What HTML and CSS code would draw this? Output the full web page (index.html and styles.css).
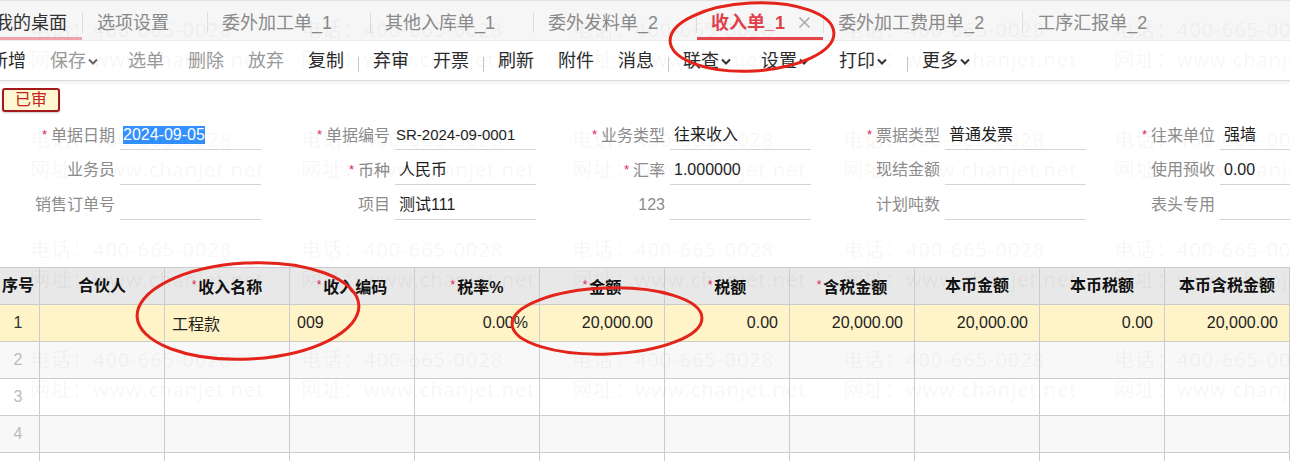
FILE: index.html
```html
<!DOCTYPE html>
<html lang="zh-CN">
<head>
<meta charset="utf-8">
<title>收入单_1</title>
<link rel="stylesheet" href="styles.css">
</head>
<body>
<div class="app">
  <div class="tabbar">
    <div class="tabs">
      <div class="tab home">我的桌面</div><span class="tsep"></span>
      <div class="tab">选项设置<span class="tclose"></span></div><span class="tsep"></span>
      <div class="tab">委外加工单_1<span class="tclose"></span></div><span class="tsep"></span>
      <div class="tab">其他入库单_1<span class="tclose"></span></div><span class="tsep"></span>
      <div class="tab">委外发料单_2<span class="tclose"></span></div><span class="tsep"></span>
      <div class="tab active">收入单_1<span class="tclose"><svg width="13" height="13" viewBox="0 0 13 13"><path d="M1.5 1.5L11.5 11.5M11.5 1.5L1.5 11.5" stroke="#aaaaaa" stroke-width="1.5" fill="none"/></svg></span></div><span class="tsep"></span>
      <div class="tab">委外加工费用单_2<span class="tclose"></span></div><span class="tsep"></span>
      <div class="tab">工序汇报单_2<span class="tclose"></span></div>
    </div>
  </div>
  <div class="toolbar">
    <div class="tools">
      <span class="tool">新增</span>
      <span class="tool off">保存<svg class="chev" width="10" height="7" viewBox="0 0 10 7"><path d="M1 1.5L5 5.5L9 1.5" stroke="#666" stroke-width="2" fill="none"/></svg></span>
      <span class="tool off">选单</span>
      <span class="tool off">删除</span>
      <span class="tool off">放弃</span>
      <span class="tool">复制</span>
      <span class="bsep"></span>
      <span class="tool">弃审</span>
      <span class="tool">开票</span>
      <span class="bsep"></span>
      <span class="tool">刷新</span>
      <span class="tool">附件</span>
      <span class="tool">消息</span>
      <span class="bsep"></span>
      <span class="tool">联查<svg class="chev" width="10" height="7" viewBox="0 0 10 7"><path d="M1 1.5L5 5.5L9 1.5" stroke="#333" stroke-width="2" fill="none"/></svg></span>
      <span class="tool">设置<svg class="chev" width="10" height="7" viewBox="0 0 10 7"><path d="M1 1.5L5 5.5L9 1.5" stroke="#333" stroke-width="2" fill="none"/></svg></span>
      <span class="tool">打印<svg class="chev" width="10" height="7" viewBox="0 0 10 7"><path d="M1 1.5L5 5.5L9 1.5" stroke="#333" stroke-width="2" fill="none"/></svg></span>
      <span class="bsep"></span>
      <span class="tool">更多<svg class="chev" width="10" height="7" viewBox="0 0 10 7"><path d="M1 1.5L5 5.5L9 1.5" stroke="#333" stroke-width="2" fill="none"/></svg></span>
    </div>
  </div>

  <div class="content">
    <div class="badge">已审</div>
    <div class="form">
      <div class="field"><label class="lbl"><i class="req">*</i>单据日期</label><div class="inp"><span class="sel">2024-09-05</span></div></div>
      <div class="field"><label class="lbl"><i class="req">*</i>单据编号</label><div class="inp small">SR-2024-09-0001</div></div>
      <div class="field"><label class="lbl"><i class="req">*</i>业务类型</label><div class="inp">往来收入</div></div>
      <div class="field"><label class="lbl"><i class="req">*</i>票据类型</label><div class="inp">普通发票</div></div>
      <div class="field"><label class="lbl"><i class="req">*</i>往来单位</label><div class="inp">强墙</div></div>

      <div class="field"><label class="lbl">业务员</label><div class="inp"></div></div>
      <div class="field"><label class="lbl"><i class="req">*</i>币种</label><div class="inp">人民币</div></div>
      <div class="field"><label class="lbl"><i class="req">*</i>汇率</label><div class="inp">1.000000</div></div>
      <div class="field"><label class="lbl">现结金额</label><div class="inp"></div></div>
      <div class="field"><label class="lbl">使用预收</label><div class="inp">0.00</div></div>

      <div class="field"><label class="lbl">销售订单号</label><div class="inp"></div></div>
      <div class="field"><label class="lbl">项目</label><div class="inp">测试111</div></div>
      <div class="field"><label class="lbl">123</label><div class="inp"></div></div>
      <div class="field"><label class="lbl">计划吨数</label><div class="inp"></div></div>
      <div class="field"><label class="lbl">表头专用</label><div class="inp"></div></div>
    </div>

    <table class="grid">
      <colgroup>
        <col class="c-no"><col class="c"><col class="c"><col class="c"><col class="c"><col class="c"><col class="c"><col class="c"><col class="c"><col class="c"><col class="c">
      </colgroup>
      <thead>
        <tr>
          <th>序号</th>
          <th>合伙人</th>
          <th><i class="hreq">*</i>收入名称</th>
          <th><i class="hreq">*</i>收入编码</th>
          <th><i class="hreq">*</i>税率%</th>
          <th><i class="hreq">*</i>金额</th>
          <th><i class="hreq">*</i>税额</th>
          <th><i class="hreq">*</i>含税金额</th>
          <th>本币金额</th>
          <th>本币税额</th>
          <th>本币含税金额</th>
        </tr>
      </thead>
      <tbody>
        <tr class="cur">
          <td class="no">1</td><td></td><td class="txt">工程款</td><td class="txt">009</td>
          <td class="num">0.00%</td><td class="num">20,000.00</td><td class="num">0.00</td><td class="num">20,000.00</td>
          <td class="num">20,000.00</td><td class="num">0.00</td><td class="num">20,000.00</td>
        </tr>
        <tr class="alt"><td class="no dim">2</td><td></td><td></td><td></td><td></td><td></td><td></td><td></td><td></td><td></td><td></td></tr>
        <tr><td class="no dim">3</td><td></td><td></td><td></td><td></td><td></td><td></td><td></td><td></td><td></td><td></td></tr>
        <tr class="alt"><td class="no dim">4</td><td></td><td></td><td></td><td></td><td></td><td></td><td></td><td></td><td></td><td></td></tr>
        <tr><td class="no dim">5</td><td></td><td></td><td></td><td></td><td></td><td></td><td></td><td></td><td></td><td></td></tr>
      </tbody>
    </table>
  </div>
</div>

<div class="watermark">
  <div class="wm"><div>电话：400-665-0028</div><div>网址：www.chanjet.net</div></div>
  <div class="wm"><div>电话：400-665-0028</div><div>网址：www.chanjet.net</div></div>
  <div class="wm"><div>电话：400-665-0028</div><div>网址：www.chanjet.net</div></div>
  <div class="wm"><div>电话：400-665-0028</div><div>网址：www.chanjet.net</div></div>
  <div class="wm"><div>电话：400-665-0028</div><div>网址：www.chanjet.net</div></div>
  <div class="wm"><div>电话：400-665-0028</div><div>网址：www.chanjet.net</div></div>
  <div class="wm"><div>电话：400-665-0028</div><div>网址：www.chanjet.net</div></div>
  <div class="wm"><div>电话：400-665-0028</div><div>网址：www.chanjet.net</div></div>
  <div class="wm"><div>电话：400-665-0028</div><div>网址：www.chanjet.net</div></div>
  <div class="wm"><div>电话：400-665-0028</div><div>网址：www.chanjet.net</div></div>
  <div class="wm"><div>电话：400-665-0028</div><div>网址：www.chanjet.net</div></div>
  <div class="wm"><div>电话：400-665-0028</div><div>网址：www.chanjet.net</div></div>
  <div class="wm"><div>电话：400-665-0028</div><div>网址：www.chanjet.net</div></div>
  <div class="wm"><div>电话：400-665-0028</div><div>网址：www.chanjet.net</div></div>
  <div class="wm"><div>电话：400-665-0028</div><div>网址：www.chanjet.net</div></div>
  <div class="wm"><div>电话：400-665-0028</div><div>网址：www.chanjet.net</div></div>
  <div class="wm"><div>电话：400-665-0028</div><div>网址：www.chanjet.net</div></div>
  <div class="wm"><div>电话：400-665-0028</div><div>网址：www.chanjet.net</div></div>
  <div class="wm"><div>电话：400-665-0028</div><div>网址：www.chanjet.net</div></div>
  <div class="wm"><div>电话：400-665-0028</div><div>网址：www.chanjet.net</div></div>
</div>

<svg class="marks" width="1290" height="461" viewBox="0 0 1290 461">
  <ellipse cx="752" cy="37" rx="82" ry="34" transform="rotate(-3 752 37)" fill="none" stroke="#e3241b" stroke-width="3"/>
  <ellipse cx="248" cy="311" rx="111" ry="48" transform="rotate(-3 248 311)" fill="none" stroke="#e3241b" stroke-width="3"/>
  <ellipse cx="607" cy="321" rx="95" ry="33" transform="rotate(-2 607 321)" fill="none" stroke="#e3241b" stroke-width="3"/>
</svg>
</body>
</html>
```

FILE: styles.css
```css
html, body {
  margin: 0;
  padding: 0;
}
body {
  width: 1290px;
  height: 461px;
  overflow: hidden;
  position: relative;
  background: #ffffff;
  font-family: "Liberation Sans", "Noto Sans CJK SC", sans-serif;
  color: #333;
}

.app {
  width: 1290px;
  height: 461px;
  overflow: hidden;
}

/* ---------- tab bar ---------- */
.tabbar {
  height: 39px;
  background: #f6f6f6;
  border-top: 1px solid #e2e2e2;
  border-bottom: 1px solid #ebebeb;
  overflow: hidden;
}
.tabs {
  display: flex;
  align-items: center;
  margin-left: -19px;
  height: 39px;
  white-space: nowrap;
}
.tab {
  display: flex;
  align-items: center;
  box-sizing: border-box;
  height: 39px;
  padding: 7px 12px 0 14px;
  border-bottom: 3px solid transparent;
  font-size: 18px;
  line-height: 24px;
  color: #8a8a8a;
  flex: none;
}
.tab.home {
  color: #333;
  padding-right: 15px;
  border-bottom-color: #f2a3aa;
}
.tab.active {
  color: #e0404a;
  font-weight: bold;
  border-bottom-color: #e5474f;
}
.tclose {
  display: inline-flex;
  width: 14px;
  height: 14px;
  margin-left: 12px;
  align-items: center;
  justify-content: center;
}
.tsep {
  flex: none;
  width: 1px;
  height: 21px;
  margin-top: 3px;
  background: #dedede;
}

/* ---------- toolbar ---------- */
.toolbar {
  height: 39px;
  background: #fff;
  border-bottom: 1px solid #dcdcdc;
  box-shadow: 0 2px 3px rgba(0, 0, 0, 0.06);
  overflow: hidden;
  position: relative;
}
.tools {
  display: flex;
  align-items: center;
  height: 39px;
  margin-left: -22px;
  white-space: nowrap;
}
.tool {
  flex: none;
  display: inline-flex;
  align-items: center;
  margin: 0 12px;
  font-size: 18px;
  line-height: 24px;
  color: #2b2b2b;
}
.tool.off {
  color: #9a9a9a;
}
.chev {
  margin-left: 2px;
  margin-right: 6px;
  margin-top: 2px;
}
.bsep {
  flex: none;
  width: 1px;
  height: 15px;
  margin: 8px 2px 0;
  background: #c8c8c8;
}

/* ---------- content ---------- */
.content {
  padding-top: 7px;
}
.badge {
  margin-left: 2px;
  width: 58px;
  height: 24px;
  box-sizing: border-box;
  border: 2px solid #a51a1a;
  border-radius: 3px;
  background: #fff8d2;
  color: #c62020;
  font-size: 16px;
  line-height: 20px;
  text-align: center;
  box-shadow: 0 1px 2px rgba(0, 0, 0, 0.2);
}

.form {
  display: grid;
  grid-template-columns: repeat(5, 275px);
  grid-auto-rows: 35px;
  margin-top: 8px;
}
.field {
  display: flex;
  align-items: flex-start;
}
.lbl {
  flex: none;
  width: 120px;
  box-sizing: border-box;
  padding-right: 5px;
  text-align: right;
  font-size: 16px;
  line-height: 30px;
  color: #8c8c8c;
  white-space: nowrap;
}
.req {
  font-style: normal;
  color: #e0245e;
  font-size: 13px;
  margin-right: 4px;
  vertical-align: 2px;
}
.inp {
  flex: none;
  width: 141px;
  height: 30px;
  box-sizing: border-box;
  border-bottom: 1px solid #d4d4d4;
  padding-left: 4px;
  font-size: 16px;
  line-height: 30px;
  color: #1e1e1e;
  white-space: nowrap;
  overflow: hidden;
}
.field:nth-child(5n) .inp {
  width: 160px;
}
.inp.small {
  font-size: 15px;
  padding-left: 1px;
}
.sel {
  background: #3390ff;
  color: #fff;
  line-height: 18px;
  display: inline-block;
  margin-left: -1px;
}

/* ---------- table ---------- */
.grid {
  margin-top: 42px;
  margin-left: -4px;
  border-collapse: collapse;
  table-layout: fixed;
  width: 1294px;
  font-size: 16px;
}
.c-no { width: 43px; }
.c { width: 125px; }
.grid th,
.grid td {
  border: 1px solid #cccccc;
  height: 37px;
  padding: 0;
  box-sizing: border-box;
  white-space: nowrap;
  overflow: hidden;
}
.grid th {
  background: #e8e8e8;
  color: #111;
  font-weight: bold;
  text-align: center;
  line-height: 20px;
}
.hreq {
  font-style: normal;
  font-weight: normal;
  color: #e0245e;
  font-size: 12px;
  margin-right: 2px;
  vertical-align: 4px;
}
.grid tr.cur td {
  background: #fff4c8;
}
.grid tr.alt td {
  background: #f8f8f8;
}
.grid td.no {
  text-align: center;
  color: #333;
}
.grid td.no.dim {
  color: #bbbbbb;
}
.grid td.txt {
  padding-left: 7px;
  color: #1e1e1e;
}
.grid td.num {
  text-align: right;
  padding-right: 11px;
  color: #1e1e1e;
}

/* ---------- watermark overlay ---------- */
.watermark {
  position: absolute;
  top: 0;
  left: 0;
  width: 1290px;
  height: 461px;
  box-sizing: border-box;
  padding: 15px 0 0 30px;
  display: grid;
  grid-template-columns: repeat(5, 271px);
  grid-auto-rows: 110px;
  overflow: hidden;
  pointer-events: none;
  font-family: "Open Sans", "Noto Sans CJK SC", sans-serif;
  font-size: 20px;
  letter-spacing: 1px;
  line-height: 30px;
  color: rgba(0, 0, 0, 0.055);
  white-space: nowrap;
  z-index: 5;
}

/* ---------- annotation marks ---------- */
.marks {
  position: absolute;
  top: 0;
  left: 0;
  pointer-events: none;
  z-index: 6;
}
```
